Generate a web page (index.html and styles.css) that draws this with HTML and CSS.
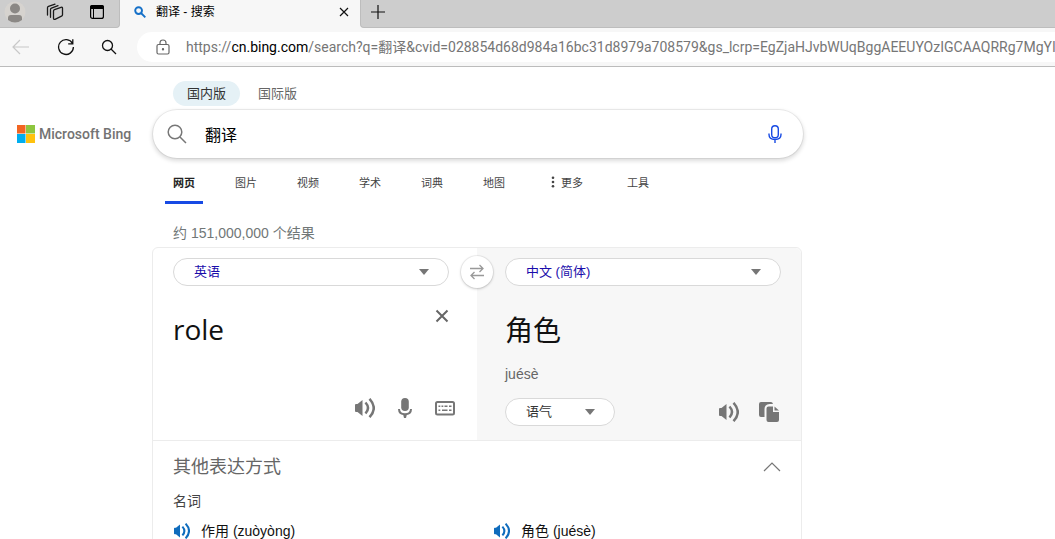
FILE: index.html
```
<!DOCTYPE html>
<html lang="zh-CN">
<head>
<meta charset="utf-8">
<meta name="viewport" content="width=device-width, initial-scale=1">
<title>翻译 - 搜索</title>
<link rel="stylesheet" href="styles.css">
</head>
<body>
<svg class="sprite" aria-hidden="true">
  <symbol id="speaker" viewBox="0 0 20 20">
    <path d="M1 6h1.500L7.500 2v16l-5-4H1q-1 0-1-1V7q0-1 1-1z" fill="currentColor"/>
    <path d="M10.500 4.500q5 5.500 0 11M14.500 .8q8.500 9.200 0 18.400" fill="none" stroke="currentColor" stroke-width="2.500"/>
  </symbol>
</svg>
<header class="browser">
  <div class="tabstrip">
    <div class="strip-left">
      <button class="icon-btn" aria-label="个人资料"><svg width="22" height="22" viewBox="0 0 22 22"><circle cx="11" cy="11" r="10.500" fill="#d6d3cf"/><circle cx="11" cy="7.500" r="5" fill="#8b8885"/><path d="M4 19v-2q0-3 3-3h8q3 0 3 3v2q-7 5-14 0z" fill="#8b8885"/></svg></button>
      <button class="icon-btn" aria-label="工作区"><svg width="18" height="18" viewBox="0 0 18 18" fill="none" stroke="#1a1a1a" stroke-width="1.300" stroke-linejoin="round" stroke-linecap="round"><path d="M7.500 8q0-1 1-1.400l6.500-2.300q1.500-.4 1.500 1v6.500q0 1-1 1.400L9 16.300q-1.500.4-1.500-1zM4.500 14.300V6.500q0-1 1-1.400L12 2.700M1.500 12V4.800q0-1 1-1.400L9 1.200"/></svg></button>
      <button class="icon-btn" aria-label="标签页操作"><svg width="16" height="16" viewBox="0 0 16 16"><rect x="1.600" y="1.600" width="12.800" height="12.800" rx="2" fill="none" stroke="#000" stroke-width="1.200"/><path d="M1 5V3q0-2 2-2h10q2 0 2 2v2z"/><path d="M4.500 5v9.500" stroke="#000"/></svg></button>
    </div>
    <div class="tab">
      <svg width="12" height="12" viewBox="0 0 12 12" fill="none" stroke="#1570c8" stroke-width="1.900"><circle cx="4.600" cy="4.600" r="3.400"/><path d="M7 7l4.300 4.300"/></svg>
      <span class="tab-title">翻译 - 搜索</span>
      <button class="icon-btn" aria-label="关闭标签页"><svg width="10" height="10" viewBox="0 0 10 10" stroke="#111" stroke-width="1.200"><path d="M1 1l8 8M9 1L1 9"/></svg></button>
    </div>
    <div class="strip-rest">
      <button class="icon-btn" aria-label="新建标签页"><svg width="14" height="14" viewBox="0 0 14 14" stroke="#111" stroke-width="1.200"><path d="M7 0v14M0 7h14"/></svg></button>
    </div>
  </div>
  <div class="toolbar">
    <div class="tools-nav">
      <button class="icon-btn" aria-label="后退" disabled><svg width="18" height="16" viewBox="0 0 18 16" fill="none" stroke="#c8c8c8" stroke-width="1.200"><path d="M17 8H1M8 1L1 8l7 7"/></svg></button>
      <button class="icon-btn" aria-label="刷新"><svg width="18" height="18" viewBox="0 0 18 18" fill="none" stroke="#111" stroke-width="1.300"><path d="M15.500 5.500A7.400 7.400 0 1 0 16.400 9M15.800 1.200v4.600h-4.600"/></svg></button>
      <button class="icon-btn" aria-label="搜索"><svg width="16" height="16" viewBox="0 0 16 16" fill="none" stroke="#111" stroke-width="1.300"><circle cx="6.500" cy="6.500" r="5"/><path d="M10 10l5 5"/></svg></button>
    </div>
    <div class="address">
      <svg class="lock" width="14" height="16" viewBox="0 0 14 16" fill="none" stroke="#666" stroke-width="1.200"><rect x="1" y="5.500" width="12" height="9.500" rx="1.500"/><path d="M4 5.500V4q0-3 3-3t3 3v1.500"/><circle cx="7" cy="10.200" r=".6" fill="#666"/></svg>
      <span class="url">https://<b>cn.bing.com</b>/search?q=翻译&amp;cvid=028854d68d984a16bc31d8979a708579&amp;gs_lcrp=EgZjaHJvbWUqBggAEEUYOzIGCAAQRRg7MgYIA</span>
    </div>
  </div>
</header>
<div class="page">
  <a class="logo" href="#"><svg width="18" height="18" viewBox="0 0 18 18"><path fill="#f26522" d="M0 0h8.500v8.500H0z"/><path fill="#8dc63f" d="M9 0h9v8.500H9z"/><path fill="#00aeef" d="M0 9h8.500v9H0z"/><path fill="#ffc20e" d="M9 9h9v9H9z"/></svg><span>Microsoft Bing</span></a>
  <main class="main">
    <div class="regions">
      <button class="region active">国内版</button>
      <button class="region">国际版</button>
    </div>
    <form class="search">
      <svg width="20" height="20" viewBox="0 0 20 20" fill="none" stroke="#777" stroke-width="1.500"><circle cx="8" cy="8" r="6.800"/><path d="M13 13l6 6"/></svg>
      <input type="text" value="翻译" aria-label="搜索">
      <button type="button" class="icon-btn" aria-label="语音搜索"><svg width="14" height="20" viewBox="0 0 14 20" fill="none" stroke="#174ae4" stroke-width="1.400"><rect x="3.700" y="1.700" width="6.600" height="12" rx="3.300"/><path d="M1 9.500v1q0 5 6 5t6-5v-1M7 15.500V19"/></svg></button>
    </form>
    <nav class="scopes">
      <a class="active" href="#">网页</a>
      <a href="#">图片</a>
      <a href="#">视频</a>
      <a href="#">学术</a>
      <a href="#">词典</a>
      <a href="#">地图</a>
      <a class="more" href="#"><svg width="4" height="12" viewBox="0 0 4 12" fill="#444"><circle cx="2" cy="1.800" r="1.300"/><circle cx="2" cy="6" r="1.300"/><circle cx="2" cy="10.200" r="1.300"/></svg>更多</a>
      <a href="#">工具</a>
    </nav>
    <p class="count">约 151,000,000 个结果</p>
    <section class="card">
      <div class="translator">
        <div class="panel source">
          <div class="picker"><select aria-label="源语言"><option>英语</option></select></div>
          <div class="entry">
            <textarea rows="1" aria-label="输入文本">role</textarea>
            <button class="icon-btn clear" aria-label="清除"><svg width="14" height="14" viewBox="0 0 14 14" stroke="#666" stroke-width="2"><path d="M1.500 1.500l11 11M12.500 1.500l-11 11"/></svg></button>
          </div>
          <div class="actions">
            <button class="icon-btn" aria-label="朗读"><svg width="20" height="20"><use href="#speaker"/></svg></button>
            <button class="icon-btn" aria-label="语音输入"><svg width="20" height="20" viewBox="0 0 20 20"><rect x="6.200" y="0" width="7.600" height="13" rx="3.800" fill="#767676"/><path d="M4 11q0 5.200 6 5.200t6-5.200" fill="none" stroke="#767676" stroke-width="2"/><path d="M8 16h4l-1 4H9z" fill="#767676"/></svg></button>
            <button class="icon-btn" aria-label="键盘"><svg width="20" height="20" viewBox="0 0 20 20" fill="none" stroke="#767676"><rect x="1" y="4" width="18" height="12.500" rx="1.500" stroke-width="2"/><path d="M3.500 8.300h1.800M6.500 8.300h1.800M9.500 8.300h3M14 8.300h2.500M3.500 12.300h1.800M7 12.300h5.500M14 12.300h2.500" stroke-width="1.600"/></svg></button>
          </div>
        </div>
        <div class="panel target">
          <div class="picker"><select aria-label="目标语言"><option>中文 (简体)</option></select></div>
          <p class="result" lang="zh-CN">角色</p>
          <p class="pinyin">juésè</p>
          <div class="footer">
            <div class="picker tone"><select aria-label="语气"><option>语气</option></select></div>
            <div class="actions">
              <button class="icon-btn" aria-label="朗读译文"><svg width="20" height="20"><use href="#speaker"/></svg></button>
              <button class="icon-btn" aria-label="复制"><svg width="20" height="20" viewBox="0 0 20 20" fill="#767676"><path d="M2 0h10q1.500 0 2 2h-3.500Q5.500 2.500 5.500 7v8H2q-2 0-2-2V2q0-2 2-2z"/><path d="M9.500 4.500h4.500V10h6v8q0 2-2 2H9.500q-2 0-2-2V6.500q0-2 2-2z"/><path d="M15.500 4.500L20 8.500h-4.500z"/></svg></button>
            </div>
          </div>
        </div>
        <button class="swap" aria-label="交换语言"><svg width="14" height="16" viewBox="0 0 14 16" fill="none" stroke="#999" stroke-width="1.300"><path d="M0 4.500h13M9.500 1l3.500 3.500L9.500 8M14 11.500H1M4.500 8L1 11.500 4.500 15"/></svg></button>
      </div>
      <div class="alternatives">
        <div class="alt-head">
          <h2>其他表达方式</h2>
          <button class="icon-btn" aria-label="收起"><svg width="18" height="10" viewBox="0 0 18 10" fill="none" stroke="#767676" stroke-width="1.200"><path d="M1 9l8-8 8 8"/></svg></button>
        </div>
        <h3>名词</h3>
        <ul>
          <li><button class="icon-btn" aria-label="朗读 作用"><svg width="16" height="16"><use href="#speaker"/></svg></button><span>作用 (zuòyòng)</span></li>
          <li><button class="icon-btn" aria-label="朗读 角色"><svg width="16" height="16"><use href="#speaker"/></svg></button><span>角色 (juésè)</span></li>
        </ul>
      </div>
    </section>
  </main>
</div>
</body>
</html>
```
FILE: styles.css
```
* { box-sizing: border-box; }
html { overflow: hidden; }
body {
  margin: 0;
  background: #fff;
  color: #111;
  font: 14px/20px "Liberation Sans", "Noto Sans CJK SC", sans-serif;
}
p, h2, h3, ul { margin: 0; padding: 0; font-weight: 400; }
a { color: inherit; text-decoration: none; }
button, input, select, textarea { font: inherit; color: inherit; border: 0; padding: 0; margin: 0; }
svg { display: block; flex: none; }
.sprite { position: absolute; width: 0; height: 0; }
.icon-btn { display: flex; align-items: center; justify-content: center; background: none; flex: none; }

/* browser frame */
.tabstrip { display: flex; height: 28px; background: #f7f7f7; }
.strip-left, .strip-rest { display: flex; align-items: center; background: #cdcdcd; border-bottom: 1px solid #bdbdbd; }
.strip-left { width: 120px; padding: 0 14px 3px 4px; border-right: 1px solid #bdbdbd; border-radius: 0 0 4px 0; gap: 20px; }
.strip-left .icon-btn:last-child { margin-left: auto; }
.tab { display: flex; align-items: center; width: 240px; padding: 0 11px 4px 14px; }
.tab-title { flex: 1; padding-left: 10px; font-size: 12px; line-height: 16px; color: #000; }
.strip-rest { flex: 1; padding: 0 10px 4px; border-left: 1px solid #bdbdbd; border-radius: 0 0 0 4px; }
.toolbar { display: flex; align-items: center; height: 39px; background: #f7f7f7; border-bottom: 1px solid #bcbcbc; }
.tools-nav { display: flex; justify-content: space-between; align-items: center; width: 137px; padding: 0 20px 0 12px; flex: none; }
.address { display: flex; align-items: center; flex: 1; min-width: 0; height: 30px; padding-left: 19px; background: #fff; border-radius: 15px 0 0 15px; overflow: hidden; }
.url { padding-left: 16px; white-space: nowrap; color: #767676; font: 14px/20px Roboto, "Noto Sans CJK SC", sans-serif; }
.url b { font-weight: 400; color: #000; }

/* search header */
.page { display: flex; align-items: flex-start; padding-top: 14px; }
.logo { display: flex; align-items: center; gap: 4px; width: 152px; flex: none; margin-top: 43px; padding-left: 17px; color: #737373; font: 500 14px/20px Roboto, sans-serif; white-space: nowrap; }
.main { flex: 1; max-width: 651px; min-width: 0; }
.regions { display: flex; gap: 4px; padding-left: 21px; }
.region { height: 25px; padding: 0 14px; border-radius: 13px; background: none; color: #666; font-size: 13px; }
.region.active { background: #e5f1f6; color: #333; }
.search { display: flex; align-items: center; height: 48px; margin: 4px 0 0 1px; padding: 0 21px 0 14px; border-radius: 24px; background: #fff; box-shadow: 0 0 0 1px rgba(0,0,0,.06), 0 2px 4px 1px rgba(0,0,0,.14); }
.search input { flex: 1; min-width: 0; height: 40px; padding-left: 18px; background: none; outline: 0; font-size: 16px; color: #000; }
.scopes { display: flex; gap: 24px; margin-top: 17px; padding-left: 13px; font-size: 11px; line-height: 16px; color: #444; }
.scopes a { padding: 0 8px 10px; border-bottom: 3px solid transparent; white-space: nowrap; }
.scopes .active { border-color: #174ae4; color: #222; font-weight: 700; }
.scopes .more { display: flex; gap: 6px; margin: 0 4px 0 6px; }
.scopes .more svg { margin-top: 1px; }
.count { margin-top: 19px; padding-left: 21px; color: #717777; }

/* translator card */
.card { margin: 4px 1px 0 0; border: 1px solid #ececec; border-radius: 6px; }
.translator { position: relative; display: grid; grid-template-columns: 1fr 1fr; border-bottom: 1px solid #ececec; }
.panel { display: flex; flex-direction: column; min-width: 0; padding-top: 10px; }
.source { padding-left: 20px; padding-right: 28px; padding-bottom: 22px; }
.target { padding-left: 28px; padding-right: 20px; padding-bottom: 14px; background: #f7f7f7; border-top-right-radius: 6px; }
.picker { display: grid; align-items: center; height: 28px; border: 1px solid #d9d9d9; border-radius: 14px; background: #fff; }
.picker::after { content: ""; grid-area: 1 / 1; justify-self: end; margin-right: 19px; border: 5px solid transparent; border-top: 6px solid #767676; border-bottom: 0; pointer-events: none; }
.picker select { grid-area: 1 / 1; width: 100%; height: 26px; padding: 0 20px; appearance: none; background: none; outline: 0; color: #1a0dab; font-size: 13px; }
.entry { display: flex; align-items: flex-start; margin-top: 22px; }
.entry textarea { flex: 1; min-width: 0; height: 42px; resize: none; overflow: hidden; outline: 0; background: none; color: #111; font: 28px/42px "Open Sans", "Noto Sans CJK SC", sans-serif; }
.clear { margin-top: 1px; }
.actions { display: flex; gap: 20px; color: #767676; }
.source .actions { justify-content: flex-end; margin: auto -6px 0 0; }
.result { margin-top: 24px; font-size: 28px; line-height: 44px; }
.pinyin { margin-top: 10px; color: #666; }
.footer { display: flex; align-items: center; justify-content: space-between; margin-top: 14px; }
.tone { width: 110px; }
.tone select { color: #333; }
.footer .actions { margin-right: 2px; }
.swap { position: absolute; top: 8px; left: 50%; margin-left: -16px; width: 32px; height: 32px; display: grid; place-items: center; border-radius: 50%; background: #fff; box-shadow: 0 0 0 1px rgba(0,0,0,.05), 0 1px 3px rgba(0,0,0,.2); }

/* alternatives */
.alternatives { padding: 14px 20px 20px; }
.alt-head { display: flex; align-items: center; justify-content: space-between; }
.alt-head h2 { font-size: 18px; line-height: 24px; color: #666; }
.alternatives h3 { margin-top: 12px; font-size: 14px; line-height: 20px; color: #444; }
.alternatives ul { display: grid; grid-template-columns: 1fr 1fr; gap: 32px; margin-top: 10px; list-style: none; }
.alternatives li { display: flex; align-items: center; gap: 11px; }
.alternatives li .icon-btn { color: #0f6cbd; padding-left: 1px; }
```
